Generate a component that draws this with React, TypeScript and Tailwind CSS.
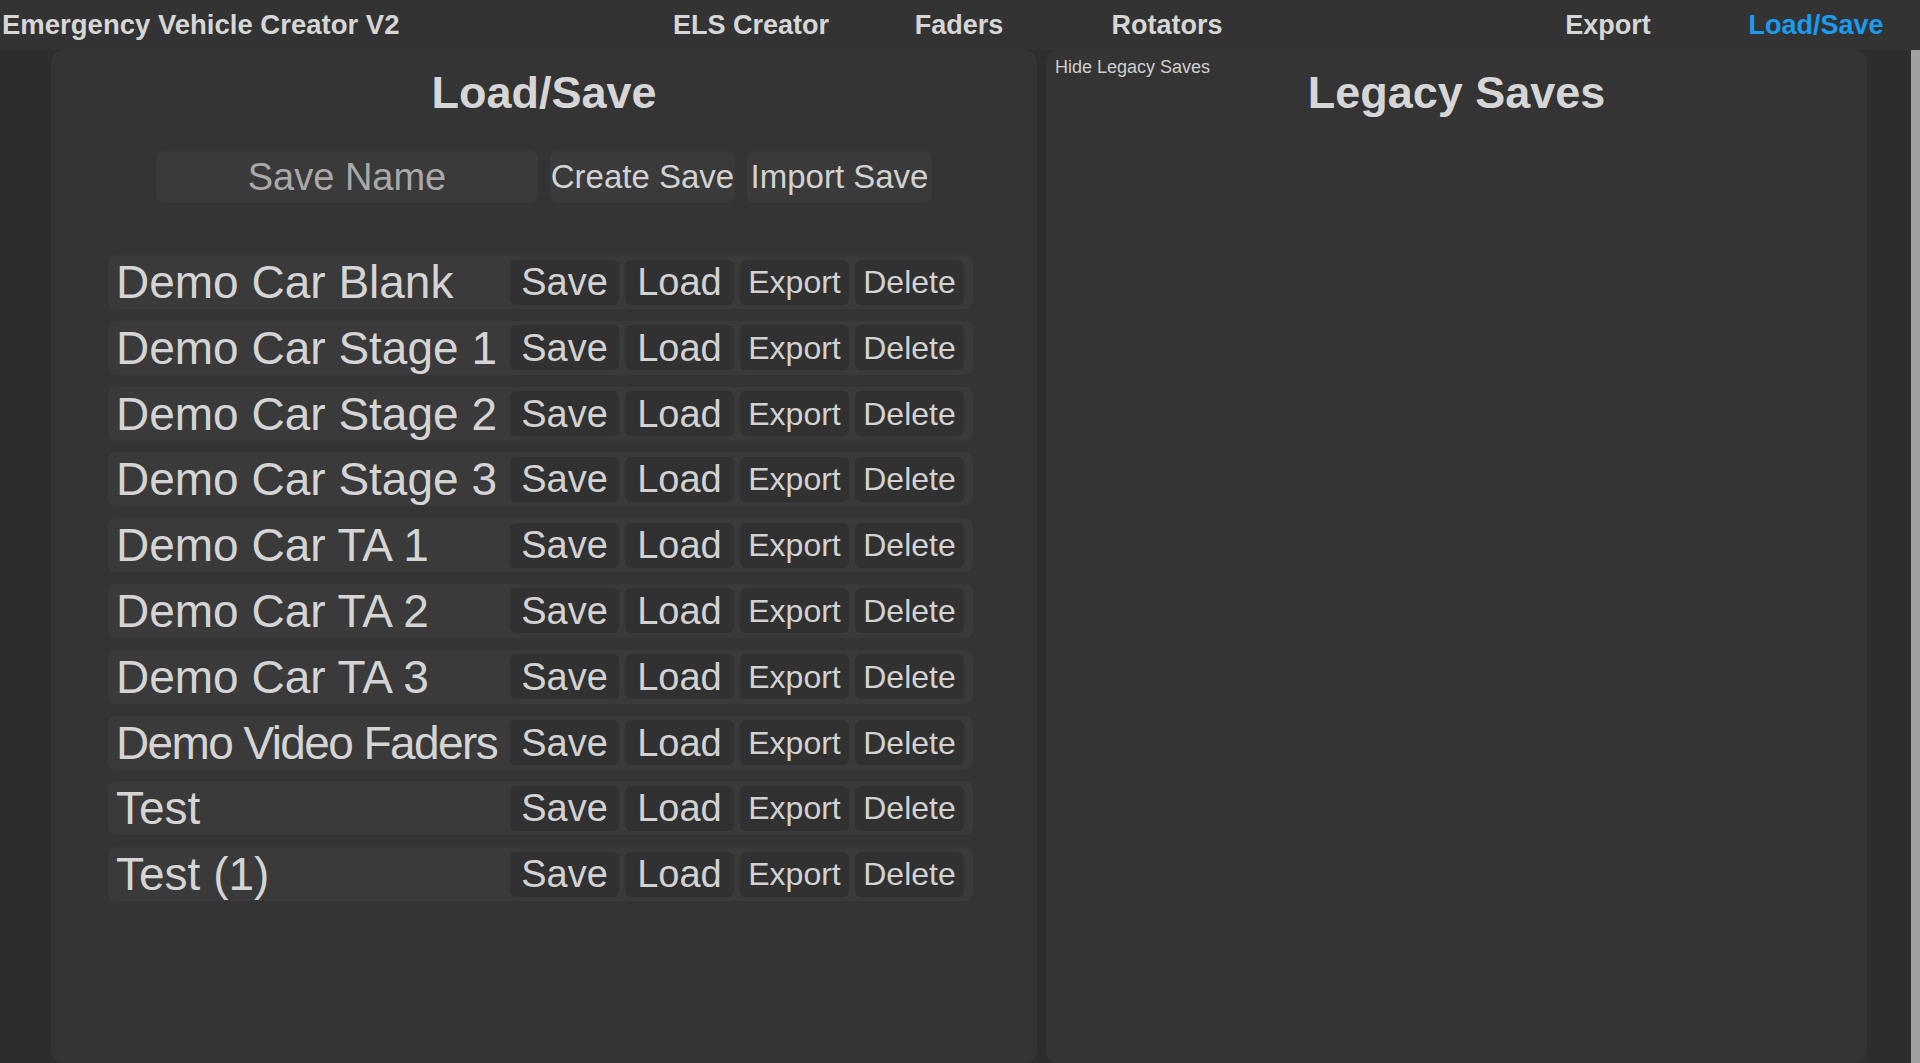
import React from 'react';

// names that are too long for the slot get squeezed a little, like the original
const saves = [
  { name: 'Demo Car Blank' },
  { name: 'Demo Car Stage 1' },
  { name: 'Demo Car Stage 2' },
  { name: 'Demo Car Stage 3' },
  { name: 'Demo Car TA 1' },
  { name: 'Demo Car TA 2' },
  { name: 'Demo Car TA 3' },
  { name: 'Demo Video Faders', tight: true },
  { name: 'Test' },
  { name: 'Test (1)' },
];

const leftNav = ['ELS Creator', 'Faders', 'Rotators'];

function RowButton({ label, small }: { label: string; small?: boolean }) {
  return (
    <button
      className={`w-[109px] h-[45px] shrink-0 rounded-[6px] bg-[#313131] text-[#d2d2d2] flex items-center justify-center leading-none ${
        small ? 'text-[32px]' : 'text-[38px]'
      }`}
    >
      {label}
    </button>
  );
}

function SaveRow({ name, tight }: { name: string; tight?: boolean }) {
  return (
    <div className="h-[54px] rounded-[8px] bg-[#3a3a3a] flex items-center pl-[8px] pr-[9px] gap-[6px]">
      <span
        className={`flex-1 min-w-0 whitespace-nowrap text-[46px] leading-none text-[#d4d4d4] ${
          tight ? 'tracking-[-1.6px]' : ''
        }`}
      >
        {name}
      </span>
      <RowButton label="Save" />
      <RowButton label="Load" />
      <RowButton label="Export" small />
      <RowButton label="Delete" small />
    </div>
  );
}

export default function App() {
  return (
    <div
      className="w-[1920px] h-[1063px] overflow-hidden bg-[#2d2d2d] text-[#d4d4d4]"
      style={{ fontFamily: '"Liberation Sans", Arial, sans-serif' }}
    >
      {/* top bar */}
      <header className="h-[50px] bg-[#333333] flex items-center font-bold text-[27px] text-[#d6d6d6]">
        <div className="w-[647px] pl-[2px] whitespace-nowrap text-[27.5px]">Emergency Vehicle Creator V2</div>
        {leftNav.map((item) => (
          <div key={item} className="w-[208px] text-center whitespace-nowrap">
            {item}
          </div>
        ))}
        <div className="flex-1" />
        <div className="w-[208px] text-center">Export</div>
        <div className="w-[208px] text-center text-[#1a9bf0]">Load/Save</div>
      </header>

      <div className="flex h-[1013px]">
        {/* load / save panel */}
        <section className="ml-[51px] w-[986px] h-[1013px] rounded-[12px] bg-[#343434] flex flex-col">
          <h1 className="pt-[17px] text-center font-bold text-[45px] leading-[52px] text-[#d6d6d6]">Load/Save</h1>
          <div className="mt-[32px] flex justify-center gap-[12px]">
            <div className="w-[382px] h-[52px] rounded-[8px] bg-[#3a3a3a] flex items-center justify-center text-[38px] text-[#a9a9a9]">
              Save Name
            </div>
            <button className="w-[185px] h-[52px] rounded-[8px] bg-[#3a3a3a] text-[33px] text-[#d2d2d2] whitespace-nowrap">
              Create Save
            </button>
            <button className="w-[185px] h-[52px] rounded-[8px] bg-[#3a3a3a] text-[33px] text-[#d2d2d2] whitespace-nowrap">
              Import Save
            </button>
          </div>
          <div className="mt-[52px] ml-[57px] w-[865px] flex flex-col gap-[11.8px]">
            {saves.map((s) => (
              <SaveRow key={s.name} name={s.name} tight={s.tight} />
            ))}
          </div>
        </section>

        {/* legacy saves panel */}
        <section className="relative ml-[9px] w-[821px] h-[1013px] rounded-[12px] bg-[#343434]">
          <button className="absolute left-[9px] top-[4px] text-[18px] text-[#cfcfcf]">Hide Legacy Saves</button>
          <h1 className="pt-[17px] text-center font-bold text-[45px] leading-[52px] text-[#d6d6d6]">Legacy Saves</h1>
        </section>

        <div className="flex-1" />
        <div className="w-[9px] h-full bg-[#a0a0a0]" />
      </div>
    </div>
  );
}
